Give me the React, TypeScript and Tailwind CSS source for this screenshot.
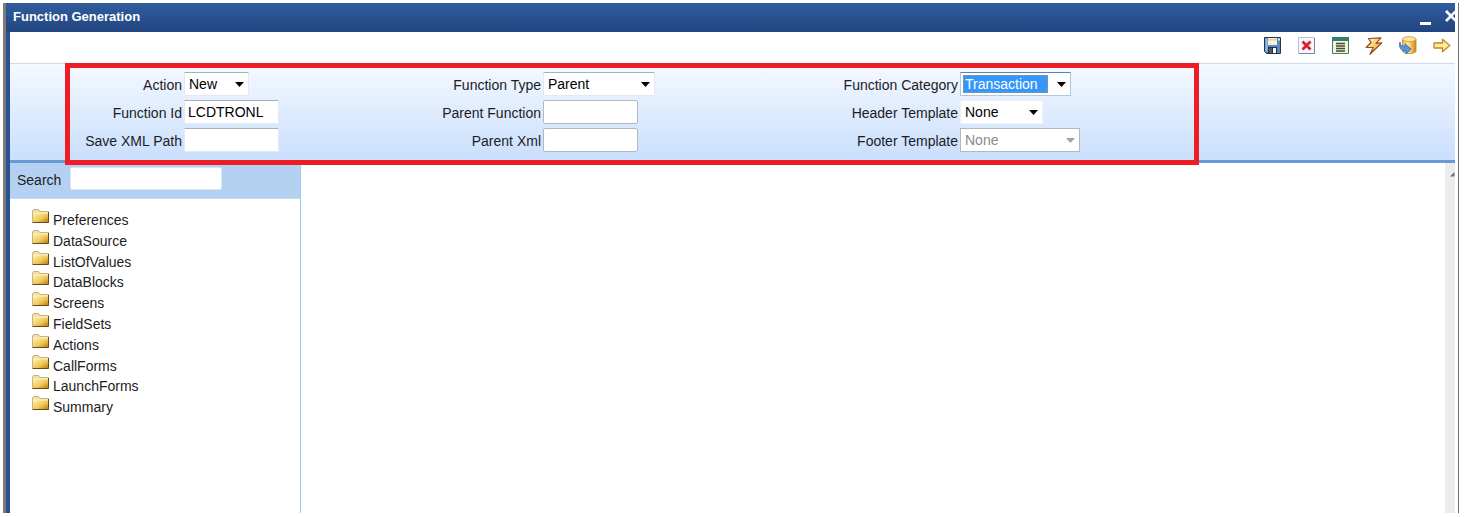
import type { ReactNode } from "react";

type FieldProps = {
  id: string;
  label: string;
  children: ReactNode;
};

function Field({ id, label, children }: FieldProps) {
  return (
    <div className="flex h-6 items-center gap-0.5">
      <label htmlFor={id} className="w-[172px] shrink-0 pt-0.5 text-right whitespace-nowrap">
        {label}
      </label>
      {children}
    </div>
  );
}

type TextBoxProps = {
  id: string;
  value?: string;
  outlined?: boolean;
};

function TextBox({ id, value = "", outlined = false }: TextBoxProps) {
  const edge = outlined
    ? "rounded-xs border-[#b4b7bd]"
    : "border-[#e3e9f2] border-t-[#a9b0ba]";
  return (
    <input
      id={id}
      type="text"
      defaultValue={value}
      className={`h-6 w-[95px] border bg-white px-[3px] text-black outline-none ${edge}`}
    />
  );
}

type DropDownProps = {
  id: string;
  value: string;
  width: string;
  edge: string;
  selected?: boolean;
  disabled?: boolean;
};

function DropDown({ id, value, width, edge, selected = false, disabled = false }: DropDownProps) {
  const color = selected ? "text-white" : disabled ? "text-[#8a8a8a]" : "text-black";
  return (
    <div className={`relative h-6 border bg-white ${width} ${edge}`}>
      {selected && (
        <span className="absolute inset-y-0.5 right-[22px] left-0.5 border border-dotted border-[#c98a4b] bg-[#3397fb]" />
      )}
      <select
        id={id}
        disabled={disabled}
        defaultValue={value}
        className={`relative block h-[21px] w-full appearance-none bg-transparent pl-1 opacity-100 outline-none ${color}`}
      >
        <option className="text-black">{value}</option>
      </select>
      <svg
        viewBox="0 0 9 5"
        className={`pointer-events-none absolute top-[9px] right-1 h-[5px] w-[9px] ${disabled ? "text-[#a3a3a3]" : "text-black"}`}
      >
        <path d="M0 0h9L4.5 5z" fill="currentColor" />
      </svg>
    </div>
  );
}

function SaveIcon() {
  return (
    <svg viewBox="0 0 17 17" className="size-[17px]">
      <path d="M.5.5h16v16h-14l-2-2z" fill="#5c86bd" stroke="#26354f" />
      <path d="M1.5 1.5h2v13h-1l-1-1z" fill="#9cc0e8" />
      <path d="M4 1h9v7H4z" fill="#f4f1dc" />
      <path d="M4 2h9v1.5H4z" fill="#e8d68a" />
      <path d="M14 1.5h2v2h-2z" fill="#dceaf8" />
      <path d="M4 10h9v6.5H4z" fill="#26303c" />
      <path d="M9 11h3v5H9z" fill="#fff" />
      <path d="M5 11h3v5H5z" fill="#4d5a68" />
    </svg>
  );
}

function DeleteIcon() {
  return (
    <svg viewBox="0 0 17 17" className="size-[17px]">
      <path d="M.5.5h16v16H.5z" fill="#f5f8fd" stroke="#b3c0d6" />
      <path d="M16.5 1v15.5H1" fill="none" stroke="#7486a6" />
      <path d="M4.5 4.5l8 8M12.5 4.5l-8 8" stroke="#dc1f26" strokeWidth="2.8" />
    </svg>
  );
}

function FormIcon() {
  return (
    <svg viewBox="0 0 17 17" className="size-[17px]">
      <path d="M.5.5h16v16H.5z" fill="#eef4dc" stroke="#3c8078" />
      <path d="M0 0h17v4H0z" fill="#2f7d74" />
      <path d="M2 4.5h13v11H2z" fill="#f8f5cb" />
      <path d="M4 6.5h9M4 9h9M4 11.5h9M4 14h9" stroke="#3c4a38" strokeWidth="1.3" />
    </svg>
  );
}

function BoltIcon() {
  return (
    <svg viewBox="0 0 18 18" className="size-[18px]">
      <defs>
        <linearGradient id="bolt" x1="0" y1="0" x2="1" y2="1">
          <stop offset="0" stopColor="#fff3c8" />
          <stop offset=".45" stopColor="#ffd277" />
          <stop offset="1" stopColor="#ec8f1c" />
        </linearGradient>
      </defs>
      <path
        d="M3.500 1.500L16 .8 11 6.300l5.800-.5L5 17.300l3.200-6.800H1.200L6 5.500z"
        fill="url(#bolt)"
        stroke="#91501c"
        strokeWidth="1.2"
        strokeLinejoin="round"
      />
    </svg>
  );
}

function DatabaseIcon() {
  return (
    <svg viewBox="0 0 18 19" className="h-[19px] w-[18px]">
      <defs>
        <linearGradient id="drum" x1="0" x2="1">
          <stop offset="0" stopColor="#f4c052" />
          <stop offset=".4" stopColor="#ffe9a0" />
          <stop offset="1" stopColor="#cf8613" />
        </linearGradient>
      </defs>
      <path d="M3.500 3v12c0 1.500 3 2.500 6.800 2.500s6.700-1 6.700-2.500V3z" fill="url(#drum)" stroke="#b9811f" strokeWidth=".8" />
      <ellipse cx="10.200" cy="3.200" rx="6.700" ry="2.500" fill="#ffe79a" stroke="#c8922c" strokeWidth=".8" />
      <path
        d="M1 6c0 3 1.500 4.500 5 4.500V7.800l6 5.200-5 5v-2.700C2 15-.5 11.500 1 6z"
        fill="#5b93e2"
        stroke="#315fae"
        strokeWidth=".8"
        strokeLinejoin="round"
      />
    </svg>
  );
}

function NextIcon() {
  return (
    <svg viewBox="0 0 18 15" className="h-[15px] w-[18px]">
      <path
        d="M1 5h8.500V1.200L16.800 7.500 9.500 13.800V10H1z"
        fill="#ffeb9c"
        stroke="#bd8a2c"
        strokeWidth="1.300"
        strokeLinejoin="round"
      />
    </svg>
  );
}

function FolderIcon() {
  return (
    <svg viewBox="0 0 17 14" className="h-3.5 w-[17px] shrink-0">
      <path d="M.5 13V2L1.500.5h5L8 2.500h8.500V13z" fill="#f0dfa0" stroke="#b6a577" strokeWidth=".8" />
      <path d="M1 4h15.500v9.500H1z" fill="url(#folder)" />
      <path d="M1 4h15" stroke="#fff6cf" strokeWidth=".8" />
      <path d="M.5 13.500h16V3" fill="none" stroke="#6b4c14" />
    </svg>
  );
}

const tools = [
  { name: "Save", icon: <SaveIcon /> },
  { name: "Delete", icon: <DeleteIcon /> },
  { name: "Show form", icon: <FormIcon /> },
  { name: "Generate", icon: <BoltIcon /> },
  { name: "Load from database", icon: <DatabaseIcon /> },
  { name: "Next", icon: <NextIcon /> },
];

const nodes = [
  "Preferences",
  "DataSource",
  "ListOfValues",
  "DataBlocks",
  "Screens",
  "FieldSets",
  "Actions",
  "CallForms",
  "LaunchForms",
  "Summary",
];

const plainEdge = "border-[#e3e9f2] border-t-[#a9b0ba]";

export default function App() {
  return (
    <div className="flex min-h-screen bg-white pt-[3px] pr-[11px] pb-1 pl-[3px] font-['Liberation_Sans',Arial,sans-serif] text-[14px] leading-4 text-[#1c1c24]">
      <svg className="absolute size-0" aria-hidden="true">
        <defs>
          <linearGradient id="folder" x1="0" y1="0" x2="1" y2="1">
            <stop offset="0" stopColor="#fff0ae" />
            <stop offset=".55" stopColor="#f0c95a" />
            <stop offset="1" stopColor="#b9780f" />
          </linearGradient>
        </defs>
      </svg>
      <div className="flex flex-1 border-r border-l-[3px] border-r-[#6f6f6f] border-l-[#7c7a7b] pr-[3px]">
        <div className="flex min-w-0 flex-1 flex-col border-l-4 border-[#2a5293]">
          <header className="-ml-1 flex h-[29px] items-center overflow-hidden bg-linear-to-b from-[#305d9f] to-[#22457f] pl-[7px]">
            <h1 className="flex-1 pb-0.5 text-[13px] font-bold text-white">Function Generation</h1>
            <button type="button" aria-label="Minimize" className="mr-3.5 flex h-4 items-end pb-px">
              <svg viewBox="0 0 11 3" className="h-[3px] w-[11px]">
                <path d="M0 0h11v3H0z" fill="#fff" />
              </svg>
            </button>
            <button type="button" aria-label="Close" className="-mr-0.5 pb-1">
              <svg viewBox="0 0 12 12" className="size-3">
                <path d="M1 1l10 10M11 1L1 11" stroke="#fff" strokeWidth="2.600" />
              </svg>
            </button>
          </header>

          <div className="flex h-[31px] items-center justify-end gap-4 bg-white pb-1 pr-1" role="toolbar">
            {tools.map((tool) => (
              <button key={tool.name} type="button" aria-label={tool.name} className="flex w-[18px] justify-center">
                {tool.icon}
              </button>
            ))}
          </div>

          <form className="relative border-t border-b-[3px] border-t-[#cfdcee] border-b-[#6a9ad6] bg-linear-to-b from-[#f5f9ff] to-[#c9dffd] py-2">
            <div className="grid grid-cols-[359fr_417fr_669fr]">
              <div className="flex flex-col gap-1">
                <Field id="action" label="Action">
                  <DropDown id="action" value="New" width="w-[65px]" edge={plainEdge} />
                </Field>
                <Field id="function-id" label="Function Id">
                  <TextBox id="function-id" value="LCDTRONL" />
                </Field>
                <Field id="save-path" label="Save XML Path">
                  <TextBox id="save-path" />
                </Field>
              </div>
              <div className="flex flex-col gap-1">
                <Field id="function-type" label="Function Type">
                  <DropDown id="function-type" value="Parent" width="w-[112px]" edge={plainEdge} />
                </Field>
                <Field id="parent-function" label="Parent Function">
                  <TextBox id="parent-function" outlined />
                </Field>
                <Field id="parent-xml" label="Parent Xml">
                  <TextBox id="parent-xml" outlined />
                </Field>
              </div>
              <div className="flex flex-col gap-1">
                <Field id="category" label="Function Category">
                  <DropDown
                    id="category"
                    value="Transaction"
                    width="w-[111px]"
                    edge="border-[#a9cbe6] border-t-[#4f86b5]"
                    selected
                  />
                </Field>
                <Field id="header-template" label="Header Template">
                  <DropDown id="header-template" value="None" width="w-[83px]" edge="border-[#eef2f8]" />
                </Field>
                <Field id="footer-template" label="Footer Template">
                  <DropDown id="footer-template" value="None" width="w-[120px]" edge="border-[#b4b7bd]" disabled />
                </Field>
              </div>
            </div>
            <div className="pointer-events-none absolute -top-px right-[17.700%] -bottom-[5px] left-[55px] z-10 border-[5px] border-[#ee1c25]" />
          </form>

          <div className="flex flex-1">
            <aside className="w-[291px] shrink-0 border-r border-[#a5c8f3]">
              <div className="flex h-9 items-start gap-[9px] border-b border-[#c5dbf5] bg-[#b5d1f2] pt-1 pl-[7px]">
                <label htmlFor="search" className="pt-[5px]">
                  Search
                </label>
                <input
                  id="search"
                  type="text"
                  className="h-[23px] w-[152px] rounded-xs border border-[#d9e5f4] bg-white px-1 outline-none"
                />
              </div>
              <ul className="mt-2.5 grid h-[208px] auto-rows-fr pl-[22px]">
                {nodes.map((node) => (
                  <li key={node} className="flex">
                    <a href="#" className="flex items-start gap-1 text-[#1c1c24]">
                      <FolderIcon />
                      <span className="pt-[3px]">{node}</span>
                    </a>
                  </li>
                ))}
              </ul>
            </aside>
            <main className="flex-1 bg-white" />
            <div className="w-2.5 bg-[#ececec] pt-2">
              <svg viewBox="0 0 10 6" className="h-1.5 w-2.5">
                <path d="M5 5.500L9.500 1v4.500z" fill="#6e6e6e" />
              </svg>
            </div>
          </div>
        </div>
      </div>
    </div>
  );
}
